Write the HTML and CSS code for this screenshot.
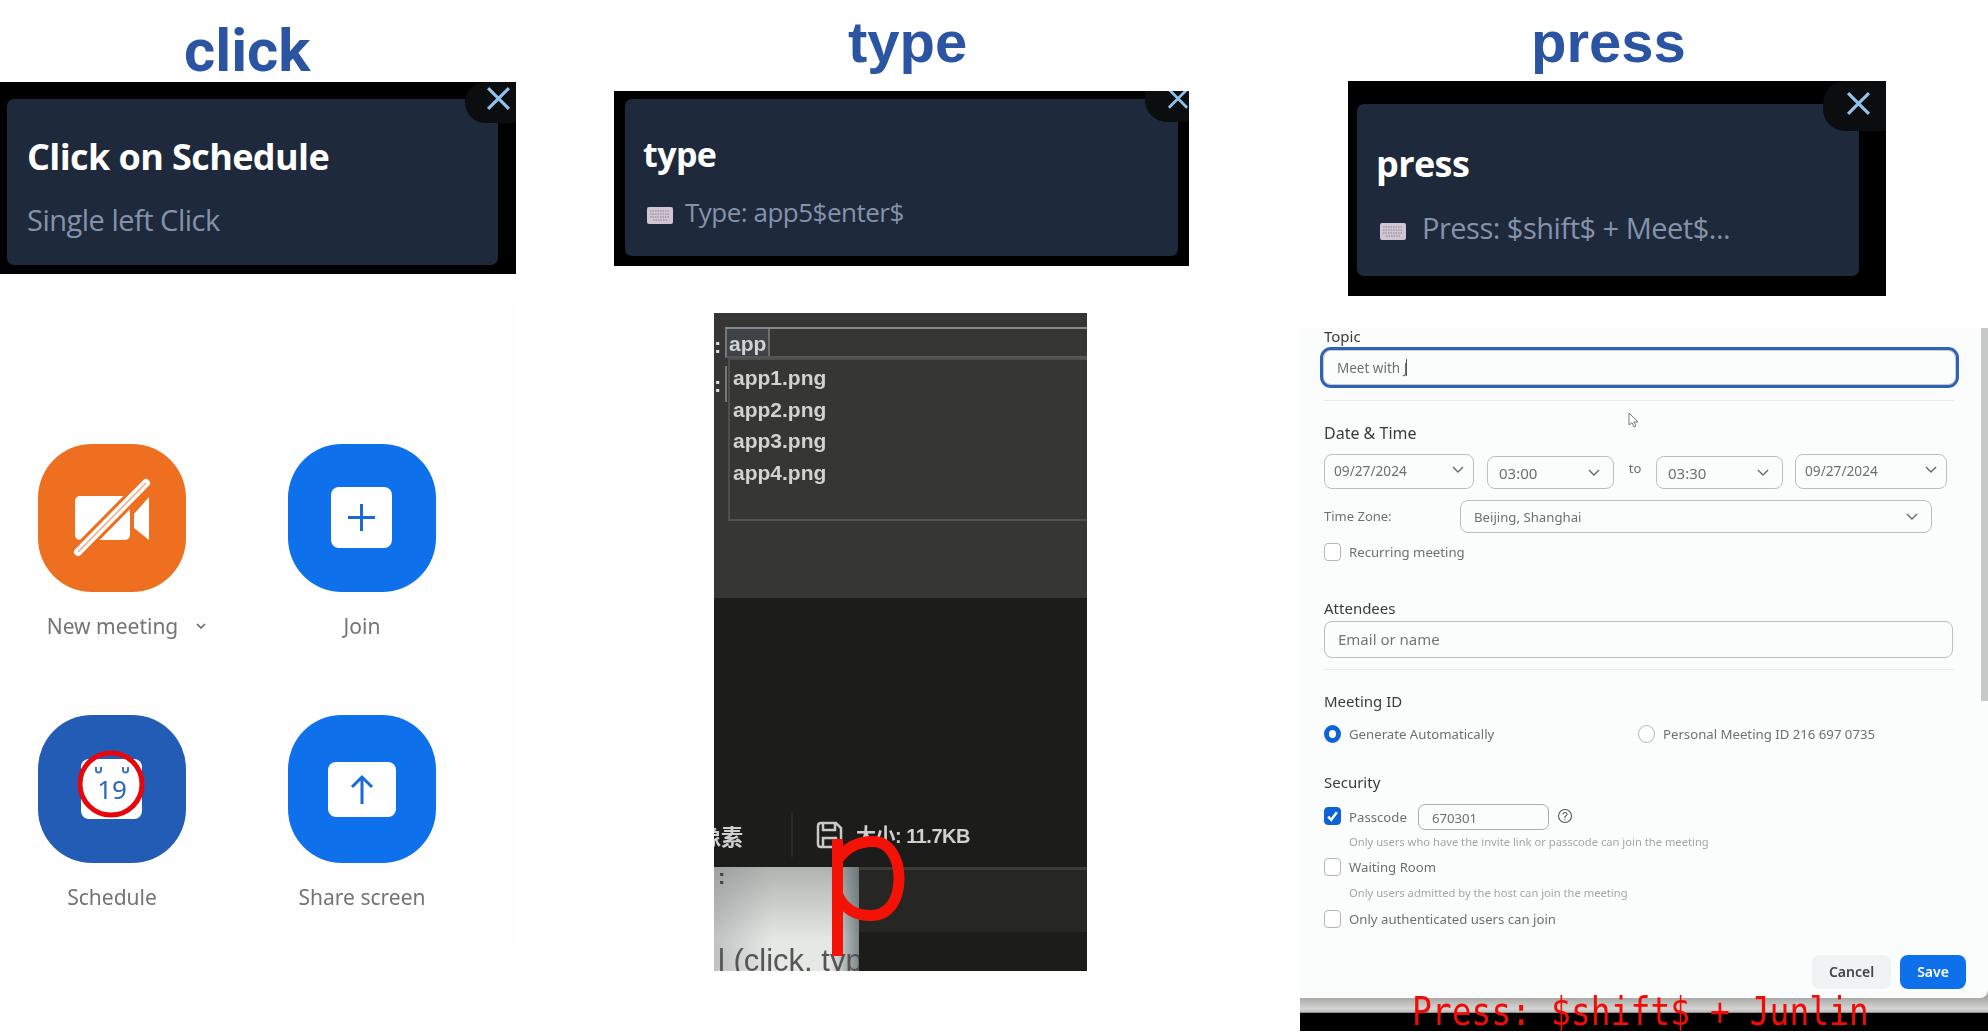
FILE: index.html
```html
<!DOCTYPE html>
<html lang="en">

<head>
    <meta charset="UTF-8">
    <title>click type press</title>
    <link rel="stylesheet" href="styles.css">
</head>

<body>
    <h1 class="heading heading-click">click</h1>
    <h1 class="heading heading-type">type</h1>
    <h1 class="heading heading-press">press</h1>

    <!-- popup cards -->
    <div class="card card-click">
        <div class="card-body">
            <div class="card-title">Click on Schedule</div>
            <div class="card-sub">Single left Click</div>
        </div>
        <div class="close"><svg viewBox="0 0 24 24"><path d="M2 2L22 22M22 2L2 22" /></svg></div>
    </div>

    <div class="card card-type">
        <div class="card-body">
            <div class="card-title">type</div>
            <div class="card-sub">
                <svg class="kbd" viewBox="0 0 26 18"><rect y="1" width="26" height="17" rx="2" fill="#cfc5d3" /><path d="M3 5H23M3 8H23M3 11H23M6 14H20" stroke="#8f8496" stroke-width="1" stroke-dasharray="1.5 1" /></svg>
                <span>Type: app5$enter$</span>
            </div>
        </div>
        <div class="close"><svg viewBox="0 0 24 24"><path d="M2 2L22 22M22 2L2 22" /></svg></div>
    </div>

    <div class="card card-press">
        <div class="card-body">
            <div class="card-title">press</div>
            <div class="card-sub">
                <svg class="kbd" viewBox="0 0 26 18"><rect y="1" width="26" height="17" rx="2" fill="#cfc5d3" /><path d="M3 5H23M3 8H23M3 11H23M6 14H20" stroke="#8f8496" stroke-width="1" stroke-dasharray="1.5 1" /></svg>
                <span>Press: $shift$ + Meet$...</span>
            </div>
        </div>
        <div class="close"><svg viewBox="0 0 24 24"><path d="M2 2L22 22M22 2L2 22" /></svg></div>
    </div>

    <!-- zoom home buttons -->
    <div class="shot shot-home">
        <div class="home-item">
            <svg class="app-icon" viewBox="0 0 148 148">
                <rect width="148" height="148" rx="54" fill="#ee6f20" />
                <rect x="37" y="52" width="55" height="44" rx="5" fill="#fff" />
                <path d="M96 70L111 53V96L96 84Z" fill="#fff" />
                <path d="M40 108L108 39" stroke="#ee6f20" stroke-width="14" />
                <path d="M40 108L108 39" stroke="#fff" stroke-width="8" stroke-linecap="round" />
                <path d="M40 108L108 39" stroke="#f3a98a" stroke-width="1.5" />
            </svg>
            <div class="home-label home-label-menu">New meeting <svg class="mini-chev" viewBox="0 0 10 6"><path d="M1 1L5 5L9 1" /></svg></div>
        </div>
        <div class="home-item">
            <svg class="app-icon" viewBox="0 0 148 148">
                <rect width="148" height="148" rx="54" fill="#0e71eb" />
                <rect x="43" y="43" width="61" height="61" rx="8" fill="#fff" />
                <path d="M60 73.500H87M73.500 60V87" stroke="#1b68d8" stroke-width="3" />
            </svg>
            <div class="home-label">Join</div>
        </div>
        <div class="home-item">
            <svg class="app-icon" viewBox="0 0 148 148">
                <rect width="148" height="148" rx="54" fill="#235cb5" />
                <rect x="43" y="44" width="61" height="60" rx="8" fill="#fff" />
                <path d="M58 52V55A2.500 2.500 0 0 0 63 55V52M85 52V55A2.500 2.500 0 0 0 90 55V52" fill="none" stroke="#3b74c8" stroke-width="2" />
                <text class="cal-day" x="74" y="84">19</text>
                <circle cx="73" cy="69" r="31" fill="none" stroke="#e8060c" stroke-width="5" />
            </svg>
            <div class="home-label">Schedule</div>
        </div>
        <div class="home-item">
            <svg class="app-icon" viewBox="0 0 148 148">
                <rect width="148" height="148" rx="54" fill="#0e71eb" />
                <rect x="40" y="47" width="68" height="55" rx="8" fill="#fff" />
                <path d="M74 89V62M64 72L74 62L84 72" fill="none" stroke="#1b68d8" stroke-width="3" />
            </svg>
            <div class="home-label">Share screen</div>
        </div>
    </div>

    <!-- file picker video frame -->
    <div class="shot shot-type">
        <div class="pick-top">
            <div class="pick-colons"><span>:</span><span>:</span></div>
            <div class="pick-main">
                <div class="pick-input"><span class="pick-typed">app</span></div>
                <div class="pick-list">
                    <div>app1.png</div>
                    <div>app2.png</div>
                    <div>app3.png</div>
                    <div>app4.png</div>
                </div>
            </div>
        </div>
        <div class="pick-bottom">
            <div class="pick-status">
                <span class="status-clip">像素</span>
                <span class="status-sep"></span>
                <svg class="save-icon" viewBox="0 0 28 28"><path d="M3 5Q3 2 6 2H21L26 7V23Q26 26 23 26H6Q3 26 3 23Z M8 2V9H20V2M8 26V17H21V26" fill="none" stroke="#c9c9c9" stroke-width="2.500" /></svg>
                <span class="status-size">大小: 11.7KB</span>
            </div>
            <div class="pick-thumbs">
                <div class="thumb"><span class="thumb-dots">:</span><span class="thumb-text">l (click, typ</span></div>
                <div class="thumb-rest"></div>
            </div>
        </div>
        <svg class="red-p" viewBox="0 0 80 125"><path d="M8.500 5V122M8.500 26C18 12 32 7.500 44 7.500C60 7.500 70 24 70 44C70 66 60 81.500 42 81.500C26 81.500 14 74 8.500 60" fill="none" stroke="#f31205" stroke-width="11" /></svg>
    </div>

    <!-- schedule form -->
    <div class="shot shot-form">
        <div class="form">
            <div class="f-head">Topic</div>
            <div class="topic-input"><span>Meet with J</span><i class="caret"></i></div>
            <div class="f-rule rule-a"></div>

            <div class="f-head head-date">Date &amp; Time</div>
            <div class="date-row">
                <div class="sel sel-date">09/27/2024<svg class="chev" viewBox="0 0 12 8"><path d="M1 1L6 6L11 1" /></svg></div>
                <div class="sel sel-time">03:00<svg class="chev" viewBox="0 0 12 8"><path d="M1 1L6 6L11 1" /></svg></div>
                <span class="to">to</span>
                <div class="sel sel-time">03:30<svg class="chev" viewBox="0 0 12 8"><path d="M1 1L6 6L11 1" /></svg></div>
                <div class="sel sel-date">09/27/2024<svg class="chev" viewBox="0 0 12 8"><path d="M1 1L6 6L11 1" /></svg></div>
            </div>
            <div class="zone-row">
                <span class="zone-label">Time Zone:</span>
                <div class="sel sel-zone">Beijing, Shanghai<svg class="chev" viewBox="0 0 12 8"><path d="M1 1L6 6L11 1" /></svg></div>
            </div>
            <div class="check-row row-recur"><i class="box"></i>Recurring meeting</div>

            <div class="f-head head-att">Attendees</div>
            <div class="att-input">Email or name</div>
            <div class="f-rule rule-b"></div>

            <div class="f-head head-id">Meeting ID</div>
            <div class="radio-row">
                <div class="check-row radio-one"><i class="radio radio-on"></i>Generate Automatically</div>
                <div class="check-row"><i class="radio"></i>Personal Meeting ID 216 697 0735</div>
            </div>

            <div class="f-head head-sec">Security</div>
            <div class="check-row row-pass">
                <i class="box box-on"><svg viewBox="0 0 12 12"><path d="M2.500 6.500L5 9L9.500 3" /></svg></i>Passcode
                <div class="pass-input">670301</div>
                <svg class="help" viewBox="0 0 16 16"><circle cx="8" cy="8" r="6.500" /><path d="M6 6.500Q6 4.500 8 4.500Q10 4.500 10 6.200Q10 7.500 8 8.500V10M8 11.200V12.200" /></svg>
            </div>
            <div class="f-help help-pass">Only users who have the invite link or passcode can join the meeting</div>
            <div class="check-row row-wait"><i class="box"></i>Waiting Room</div>
            <div class="f-help help-wait">Only users admitted by the host can join the meeting</div>
            <div class="check-row row-auth"><i class="box"></i>Only authenticated users can join</div>

            <div class="btn-row">
                <div class="btn btn-cancel">Cancel</div>
                <div class="btn btn-save">Save</div>
            </div>
        </div>
        <div class="form-shade"></div>
        <div class="form-black"></div>
        <div class="scrollbar"></div>
        <svg class="pointer" viewBox="0 0 12 17"><path d="M1 1V13L4 10.500L6 15L8 14L6 10H10Z" fill="#fff" stroke="#777" stroke-width="1" /></svg>
        <div class="overlay-text">Press: $shift$ + Junlin</div>
    </div>
</body>

</html>
```

FILE: styles.css
```css
body {
    margin: 0;
    width: 1988px;
    height: 1032px;
    overflow: hidden;
    position: relative;
    background: #fff;
    font-family: 'Open Sans', 'Noto Sans', sans-serif;
}

/* slide items sit on a free canvas */
.heading,
.card,
.shot {
    position: absolute;
    margin: 0;
}

.heading {
    color: #2b54a3;
    font-family: 'Liberation Sans', Arial, sans-serif;
    font-size: 58px;
    font-weight: 700;
    line-height: 66px;
}

.heading-click {
    left: 184px;
    top: 18px;
    font-family: Roboto, sans-serif;
    font-size: 60px;
}

.heading-type {
    left: 848px;
    top: 9px;
}

.heading-press {
    left: 1531px;
    top: 9px;
}

/* cards */
.card {
    background: #000;
    overflow: hidden;
    box-sizing: border-box;
}

.card-click {
    left: 0;
    top: 82px;
    width: 516px;
    height: 192px;
    padding: 17px 0 0 7px;
}

.card-type {
    left: 614px;
    top: 91px;
    width: 575px;
    height: 175px;
    padding: 8px 0 0 11px;
}

.card-press {
    left: 1348px;
    top: 81px;
    width: 538px;
    height: 215px;
    padding: 23px 0 0 9px;
}

.card-body {
    background: #1e293b;
    border-radius: 7px;
    box-sizing: border-box;
    display: flex;
    flex-direction: column;
}

.card-click .card-body {
    width: 491px;
    height: 166px;
    padding: 36px 20px 0;
    gap: 23px;
}

.card-type .card-body {
    width: 553px;
    height: 157px;
    padding: 33px 18px 0;
    gap: 18px;
}

.card-press .card-body {
    width: 502px;
    height: 172px;
    padding: 38px 19px 0;
    gap: 24px;
}

.card-title {
    color: #fff;
    font-size: 36px;
    font-weight: 700;
    line-height: 44px;
    letter-spacing: -0.6px;
}

.card-type .card-title {
    font-size: 34px;
}

.card-sub {
    color: #8493aa;
    font-size: 29px;
    line-height: 36px;
    letter-spacing: -0.5px;
    display: flex;
    align-items: center;
    gap: 12px;
}

.card-type .card-sub {
    font-size: 26px;
}

.card-press .card-sub {
    gap: 16px;
}

.kbd {
    width: 26px;
    height: 18px;
    margin: 6px 0 0 4px;
    flex: none;
}

.close {
    position: absolute;
    right: 0;
    background: #0b0d0f;
    border-bottom-left-radius: 22px;
    display: flex;
    align-items: center;
    justify-content: center;
}

.close svg {
    width: 25px;
    height: 25px;
    fill: none;
    stroke: #8fc2ec;
    stroke-width: 3;
}

.card-click .close {
    top: 0;
    width: 51px;
    height: 41px;
    padding: 0 0 8px 16px;
    box-sizing: border-box;
    border-top-left-radius: 22px;
}

.card-type .close {
    top: 0;
    width: 44px;
    height: 31px;
    padding: 0 0 16px 22px;
    box-sizing: border-box;
}

.card-press .close {
    top: 0;
    width: 63px;
    height: 50px;
    padding: 0 0 5px 7px;
    box-sizing: border-box;
    border-top-left-radius: 22px;
}

/* video frames are soft in the source */
.shot {
    filter: blur(0.5px);
}

/* home buttons */
.shot-home {
    left: 14px;
    top: 304px;
    width: 503px;
    height: 647px;
    background: #fdfefd;
    box-sizing: border-box;
    padding: 140px 0 0 24px;
    display: grid;
    grid-template-columns: 148px 148px;
    grid-template-rows: 271px 200px;
    column-gap: 102px;
}

.home-item {
    display: flex;
    flex-direction: column;
    align-items: center;
    gap: 20px;
}

.app-icon {
    width: 148px;
    height: 148px;
    flex: none;
    display: block;
}

.home-label {
    color: #747474;
    font-family: 'Noto Sans', sans-serif;
    font-size: 21px;
    line-height: 28px;
    white-space: nowrap;
}

.home-label-menu {
    display: flex;
    align-items: center;
    gap: 18px;
    margin-left: 29px;
}

.mini-chev {
    width: 10px;
    height: 6px;
    fill: none;
    stroke: #666;
    stroke-width: 1.5;
}

.cal-day {
    fill: #2f66bf;
    font-family: 'Noto Sans', sans-serif;
    font-size: 26px;
    text-anchor: middle;
}

/* file picker frame */
.shot-type {
    left: 714px;
    top: 313px;
    width: 373px;
    height: 658px;
    overflow: hidden;
    display: flex;
    flex-direction: column;
    font-family: 'Liberation Sans', Arial, 'Noto Sans CJK SC', sans-serif;
}

.pick-top {
    height: 285px;
    flex: none;
    background: #363735;
    box-sizing: border-box;
    padding-top: 14px;
    display: flex;
}

.pick-colons {
    width: 11px;
    color: #ddd;
    font-size: 22px;
    font-weight: 700;
    display: flex;
    flex-direction: column;
    gap: 13px;
    padding-top: 6px;
    align-items: flex-start;
}

.pick-main {
    flex: 1;
    color: #d2d2d2;
    font-size: 21px;
    font-weight: 700;
}

.pick-input {
    height: 31px;
    border-top: 2px solid #8a8b89;
    border-left: 2px solid #777;
    border-bottom: 2px solid #565755;
    box-sizing: border-box;
    display: flex;
}

.pick-typed {
    padding: 0 2px 0 2px;
    background: #3d4347;
    border-right: 2px solid #6e6f6d;
    line-height: 29px;
}

.pick-list {
    position: relative;
    margin-left: 3px;
    height: 163px;
    border: 2px solid #4f504e;
    border-right: 0;
    box-sizing: border-box;
    padding: 2px 0 0 3px;
    line-height: 31.6px;
}

.pick-list::before {
    content: '';
    position: absolute;
    left: -5px;
    top: 6px;
    width: 2px;
    height: 36px;
    background: #777;
}

.pick-bottom {
    flex: 1;
    background: #1c1d1b;
    display: flex;
    flex-direction: column;
    padding-top: 215px;
    box-sizing: border-box;
}

.pick-status {
    height: 54px;
    flex: none;
    display: flex;
    align-items: center;
    color: #cfcfcf;
    font-size: 20px;
    font-weight: 700;
    box-sizing: border-box;
    padding-bottom: 11px;
}

.status-clip {
    width: 29px;
    overflow: hidden;
    white-space: nowrap;
    direction: rtl;
    font-size: 22px;
}

.status-sep {
    width: 2px;
    height: 44px;
    background: #2b2c2a;
    margin: 0 22px 0 48px;
}

.save-icon {
    width: 28px;
    height: 28px;
    flex: none;
}

.status-size {
    margin-left: 13px;
    letter-spacing: -0.5px;
}

.pick-thumbs {
    flex: 1;
    display: flex;
    border-top: 3px solid #3b3c3a;
}

.thumb {
    width: 145px;
    margin-top: -3px;
    background: linear-gradient(90deg, rgba(120, 125, 125, 0.35), rgba(255, 255, 255, 0) 40%, rgba(255, 255, 255, 0) 80%, rgba(70, 85, 90, 0.65)), linear-gradient(#b0b2b0, #e6e8e6 70%);
    overflow: hidden;
    display: flex;
    flex-direction: column;
    justify-content: flex-end;
}

.thumb-dots {
    color: #444;
    font-size: 22px;
    font-weight: 700;
    line-height: 20px;
    padding-left: 4px;
    flex: 1;
}

.thumb-text {
    color: #555;
    font-size: 31px;
    line-height: 26px;
    padding-left: 4px;
    white-space: nowrap;
    height: 23px;
}

.thumb-rest {
    flex: 1;
    height: 62px;
    background: #262725;
}

.red-p {
    position: absolute;
    left: 115px;
    top: 521px;
    width: 80px;
    height: 125px;
}

/* schedule form */
.shot-form {
    left: 1300px;
    top: 328px;
    width: 688px;
    height: 703px;
    font-family: 'Noto Sans', sans-serif;
    color: #6f6f6f;
    font-size: 14px;
    overflow: hidden;
    background: #a9aaa8;
}

.form {
    height: 670px;
    background: #fbfdfc;
    box-sizing: border-box;
    padding-left: 24px;
    border-bottom-right-radius: 8px;
}

.form-shade {
    height: 15px;
    background: linear-gradient(#a9aaa8, #d3d4d2 70%, #c2c3c1 90%, #777 100%);
}

.form-black {
    height: 18px;
    background: #000;
}

.scrollbar {
    position: absolute;
    right: 0;
    top: 0;
    width: 7px;
    height: 373px;
    background: #c7c9c9;
}

.pointer {
    position: absolute;
    left: 328px;
    top: 84px;
    width: 12px;
    height: 17px;
}

.overlay-text {
    position: absolute;
    left: 112px;
    top: 664px;
    color: #f30c06;
    font-family: 'DejaVu Sans Mono', 'Liberation Mono', monospace;
    font-size: 33px;
    line-height: 40px;
    white-space: nowrap;
    transform: scaleY(1.2);
}

.f-head {
    color: #3a3a3a;
    font-size: 15px;
    line-height: 16px;
    padding-bottom: 2px;
}

.head-date {
    margin-top: 24px;
    font-size: 16px;
}

.head-att {
    margin-top: 39px;
}

.head-id {
    margin-top: 23px;
}

.head-sec {
    margin-top: 31px;
}

.topic-input {
    width: 639px;
    height: 41px;
    margin: 1px 0 0 -4px;
    box-sizing: border-box;
    border: 3px solid #2d62b5;
    box-shadow: inset 0 0 0 1px #c9c9c9;
    border-radius: 11px;
    padding-left: 14px;
    display: flex;
    align-items: center;
    font-size: 13.5px;
}

.caret {
    width: 1px;
    height: 17px;
    background: #555;
    margin-left: -1px;
}

.f-rule {
    width: 630px;
    height: 1px;
    background: #e8eeee;
}

.rule-a {
    margin-top: 12px;
}

.rule-b {
    margin-top: 11px;
}

.sel {
    box-sizing: border-box;
    border: 1px solid #bdbfbf;
    border-radius: 8px;
    display: flex;
    align-items: center;
    justify-content: space-between;
    padding: 0 13px;
    font-size: 13.7px;
    white-space: nowrap;
}

.chev {
    width: 12px;
    height: 8px;
    fill: none;
    stroke: #666;
    stroke-width: 1.4;
}

.date-row {
    margin-top: 11px;
    height: 35px;
    display: flex;
    align-items: flex-end;
}

.sel-date {
    width: 150px;
    height: 35px;
    padding: 0 9px 3px;
}

.sel-time {
    width: 127px;
    height: 33px;
    margin-left: 13px;
    padding: 0 13px 0 11px;
    font-size: 15px;
}

.to {
    width: 42px;
    margin-right: -13px;
    text-align: center;
    line-height: 33px;
    padding-bottom: 4px;
    font-size: 13px;
    flex: none;
}

.date-row .sel-date:last-child {
    margin-left: 12px;
    width: 152px;
}

.zone-row {
    margin-top: 11px;
    display: flex;
    align-items: center;
    gap: 62px;
}

.zone-label {
    font-size: 13px;
    width: 74px;
    padding-bottom: 2px;
}

.sel-zone {
    width: 472px;
    height: 33px;
    font-size: 13.2px;
}

.check-row {
    display: flex;
    align-items: center;
    height: 18px;
    white-space: nowrap;
    font-size: 13.2px;
}

.box,
.radio {
    width: 17px;
    height: 18px;
    box-sizing: border-box;
    border: 1px solid #b5b7b7;
    border-radius: 4px;
    margin-right: 8px;
    flex: none;
    background: #fff;
}

.radio {
    border-radius: 50%;
}

.radio-on {
    border: 5px solid #0e63d8;
}

.box-on {
    background: #0e63d8;
    border-color: #0e63d8;
    display: flex;
    margin-bottom: 2px;
}

.box-on svg {
    fill: none;
    stroke: #fff;
    stroke-width: 2;
}

.row-recur {
    margin-top: 10px;
}

.att-input {
    width: 629px;
    height: 37px;
    margin-top: 3px;
    box-sizing: border-box;
    border: 1px solid #bdbfbf;
    border-radius: 8px;
    padding-left: 13px;
    line-height: 35px;
    font-size: 15px;
    color: #767676;
}

.radio-row {
    margin-top: 14px;
    display: flex;
}

.radio-one {
    width: 314px;
}

.row-pass {
    margin-top: 12px;
    height: 26px;
}

.pass-input {
    width: 131px;
    height: 26px;
    margin-left: 11px;
    box-sizing: border-box;
    border: 1px solid #a9abab;
    border-radius: 7px;
    padding-left: 13px;
    line-height: 26px;
}

.help {
    width: 16px;
    height: 16px;
    margin: 0 0 3px 8px;
    fill: none;
    stroke: #555;
    stroke-width: 1.1;
}

.f-help {
    color: #a4a6a6;
    font-size: 11.2px;
    line-height: 14px;
    padding-left: 25px;
    white-space: nowrap;
}

.help-pass {
    margin-top: 5px;
}

.row-wait {
    margin-top: 9px;
}

.help-wait {
    margin-top: 10px;
}

.row-auth {
    margin-top: 10px;
}

.btn-row {
    margin-top: 27px;
    padding-right: 22px;
    display: flex;
    justify-content: flex-end;
    gap: 9px;
}

.btn {
    height: 34px;
    border-radius: 8px;
    font-size: 14px;
    font-weight: 600;
    line-height: 34px;
    text-align: center;
}

.btn-cancel {
    width: 79px;
    background: #f1f2f3;
    color: #444;
}

.btn-save {
    width: 66px;
    background: #0e71eb;
    color: #fff;
}
```
